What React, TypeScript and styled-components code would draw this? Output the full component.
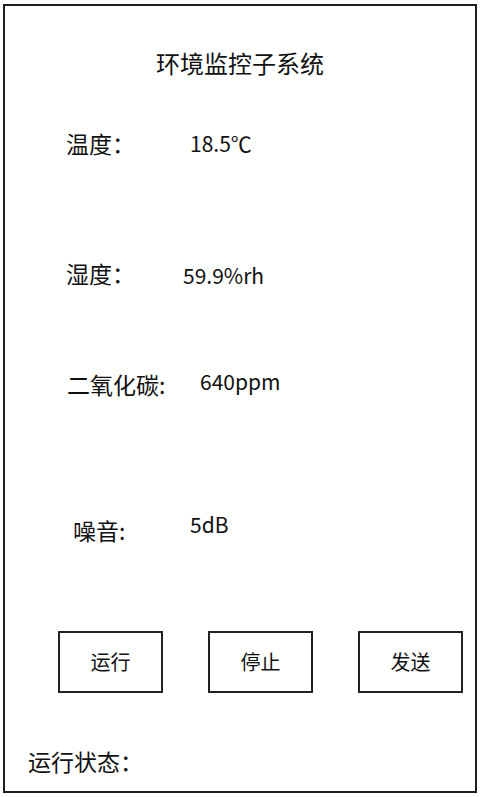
import React from "react";
import styled, { createGlobalStyle } from "styled-components";

const Global = createGlobalStyle`
  html, body { margin: 0; padding: 0; background: #fff; }
  body { font-family: "Noto Sans CJK SC", "Noto Sans", sans-serif; color: #111; }
`;

const Frame = styled.div`
  box-sizing: border-box;
  margin: 4px 3px 0 3px;
  width: 474px;
  height: 789px;
  border: 2px solid #1e1e1e;
  display: flex;
  flex-direction: column;
`;

const Title = styled.div`
  margin-top: 45px;
  font-size: 24px;
  line-height: 24px;
  text-align: center;
`;

const Row = styled.div<{ $gap: number; $left: number }>`
  display: flex;
  align-items: flex-start;
  margin-top: ${(p) => p.$gap}px;
  padding-left: ${(p) => p.$left}px;
`;

const Label = styled.div<{ $width: number }>`
  width: ${(p) => p.$width}px;
  flex: none;
  font-size: 23px;
  line-height: 23px;
  white-space: nowrap;
`;

const Value = styled.div<{ $dy: number }>`
  margin-top: ${(p) => p.$dy}px;
  font-size: 21px;
  line-height: 21px;
  white-space: nowrap;
`;

const Buttons = styled.div`
  display: flex;
  gap: 45px;
  margin-top: 89px;
  padding-left: 53px;
`;

const Button = styled.div`
  box-sizing: border-box;
  width: 105px;
  height: 62px;
  border: 2px solid #222;
  display: flex;
  align-items: center;
  justify-content: center;
  font-size: 20px;
  line-height: 20px;
`;

const Status = styled.div`
  margin-top: 57px;
  padding-left: 23px;
  font-size: 23px;
  line-height: 23px;
`;

const rows = [
  { gap: 57, x: 66, vx: 190, dy: 1, label: "温度：", value: "18.5℃" },
  { gap: 107, x: 66, vx: 183, dy: 3, label: "湿度：", value: "59.9%rh" },
  { gap: 87, x: 67, vx: 200, dy: -2, label: "二氧化碳:", value: "640ppm" },
  { gap: 123, x: 73, vx: 190, dy: -5, label: "噪音:", value: "5dB" },
];

export default function App() {
  return (
    <>
      <Global />
      <Frame>
        <Title>环境监控子系统</Title>
        {rows.map((r) => (
          <Row key={r.label} $gap={r.gap} $left={r.x - 5}>
            <Label $width={r.vx - r.x}>{r.label}</Label>
            <Value $dy={r.dy}>{r.value}</Value>
          </Row>
        ))}
        <Buttons>
          <Button>运行</Button>
          <Button>停止</Button>
          <Button>发送</Button>
        </Buttons>
        <Status>运行状态：</Status>
      </Frame>
    </>
  );
}
